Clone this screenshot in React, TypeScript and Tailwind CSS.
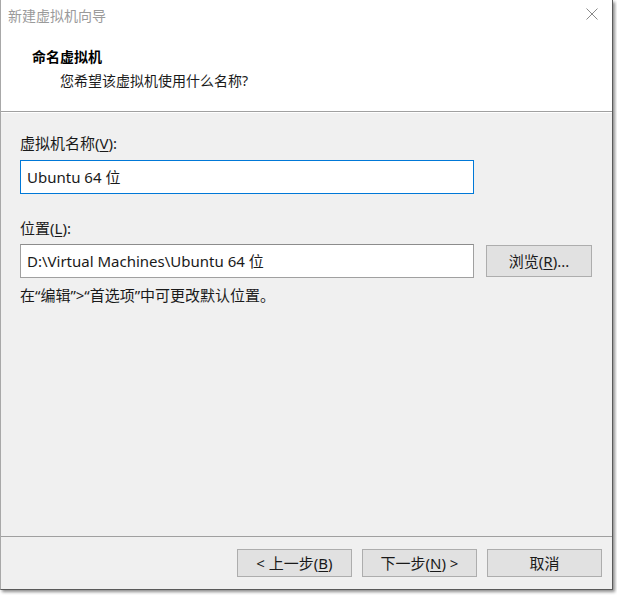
import React from 'react';

const font = { fontFamily: '"Noto Sans", "Noto Sans CJK SC", sans-serif' };

const Btn: React.FC<{ children: React.ReactNode; className?: string }> = ({ children, className = '' }) => (
  <button
    className={`h-[28px] bg-[#e1e1e1] border border-[#adadad] text-[15px] text-[#1a1a1a] flex items-center justify-center leading-none ${className}`}
  >
    {children}
  </button>
);

const App: React.FC = () => {
  return (
    <div className="w-[617px] h-[595px] bg-white" style={font}>
      <div className="w-[613px] h-[590px] flex flex-col bg-white border-l border-[#a8a8a8] border-r border-b border-r-[#5a5a5a] border-b-[#5a5a5a] shadow-[2px_2px_3px_rgba(0,0,0,0.45)]">
        {/* title bar */}
        <div className="h-[30px] flex items-center justify-between pl-[7px] pr-[14px]">
          <span className="text-[14px] text-[#9a9a9a]">新建虚拟机向导</span>
          <svg width="12" height="12" viewBox="0 0 12 12" className="mt-[-2px]">
            <path d="M0.5 0.5 L11.5 11.5 M11.5 0.5 L0.5 11.5" stroke="#8a8a8a" strokeWidth="1" fill="none" />
          </svg>
        </div>

        {/* header */}
        <div className="h-[82px] pl-[31px] pt-[16px] border-b border-[#a0a0a0]">
          <div className="text-[14px] font-bold text-black leading-[22px]">命名虚拟机</div>
          <div className="text-[14px] text-[#1a1a1a] leading-[22px] pl-[28px] mt-[2px]">您希望该虚拟机使用什么名称?</div>
        </div>

        {/* body */}
        <div className="flex-1 bg-[#f0f0f0] border-t border-white pl-[19px] pr-[20px] pt-[20px] text-[15px] text-[#1a1a1a]">
          <div className="leading-[20px]">
            虚拟机名称(<span className="underline underline-offset-2">V</span>):
          </div>
          <div className="mt-[7px] w-[454px] h-[34px] bg-white border border-[#0078d7] flex items-center pl-[6px]">
            Ubuntu 64 位
          </div>

          <div className="leading-[20px] mt-[24px]">
            位置(<span className="underline underline-offset-2">L</span>):
          </div>
          <div className="mt-[6px] flex items-center gap-[12px]">
            <div className="w-[454px] h-[34px] bg-white border border-[#a0a0a0] border-t-[#8c8c8c] flex items-center pl-[6px]">
              D:\Virtual Machines\Ubuntu 64 位
            </div>
            <Btn className="w-[106px] h-[32px]">
              浏览(<span className="underline underline-offset-2">R</span>)...
            </Btn>
          </div>

          <div className="leading-[20px] mt-[7px]">在“编辑”&gt;“首选项”中可更改默认位置。</div>
        </div>

        {/* footer */}
        <div className="h-[53px] bg-[#f0f0f0] border-t border-[#a0a0a0] flex items-start justify-end pt-[12px] pr-[10px] gap-[10px]">
          <Btn className="w-[115px]">
            &lt; 上一步(<span className="underline underline-offset-2">B</span>)
          </Btn>
          <Btn className="w-[115px]">
            下一步(<span className="underline underline-offset-2">N</span>) &gt;
          </Btn>
          <Btn className="w-[115px]">取消</Btn>
        </div>
      </div>
    </div>
  );
};

export default App;
